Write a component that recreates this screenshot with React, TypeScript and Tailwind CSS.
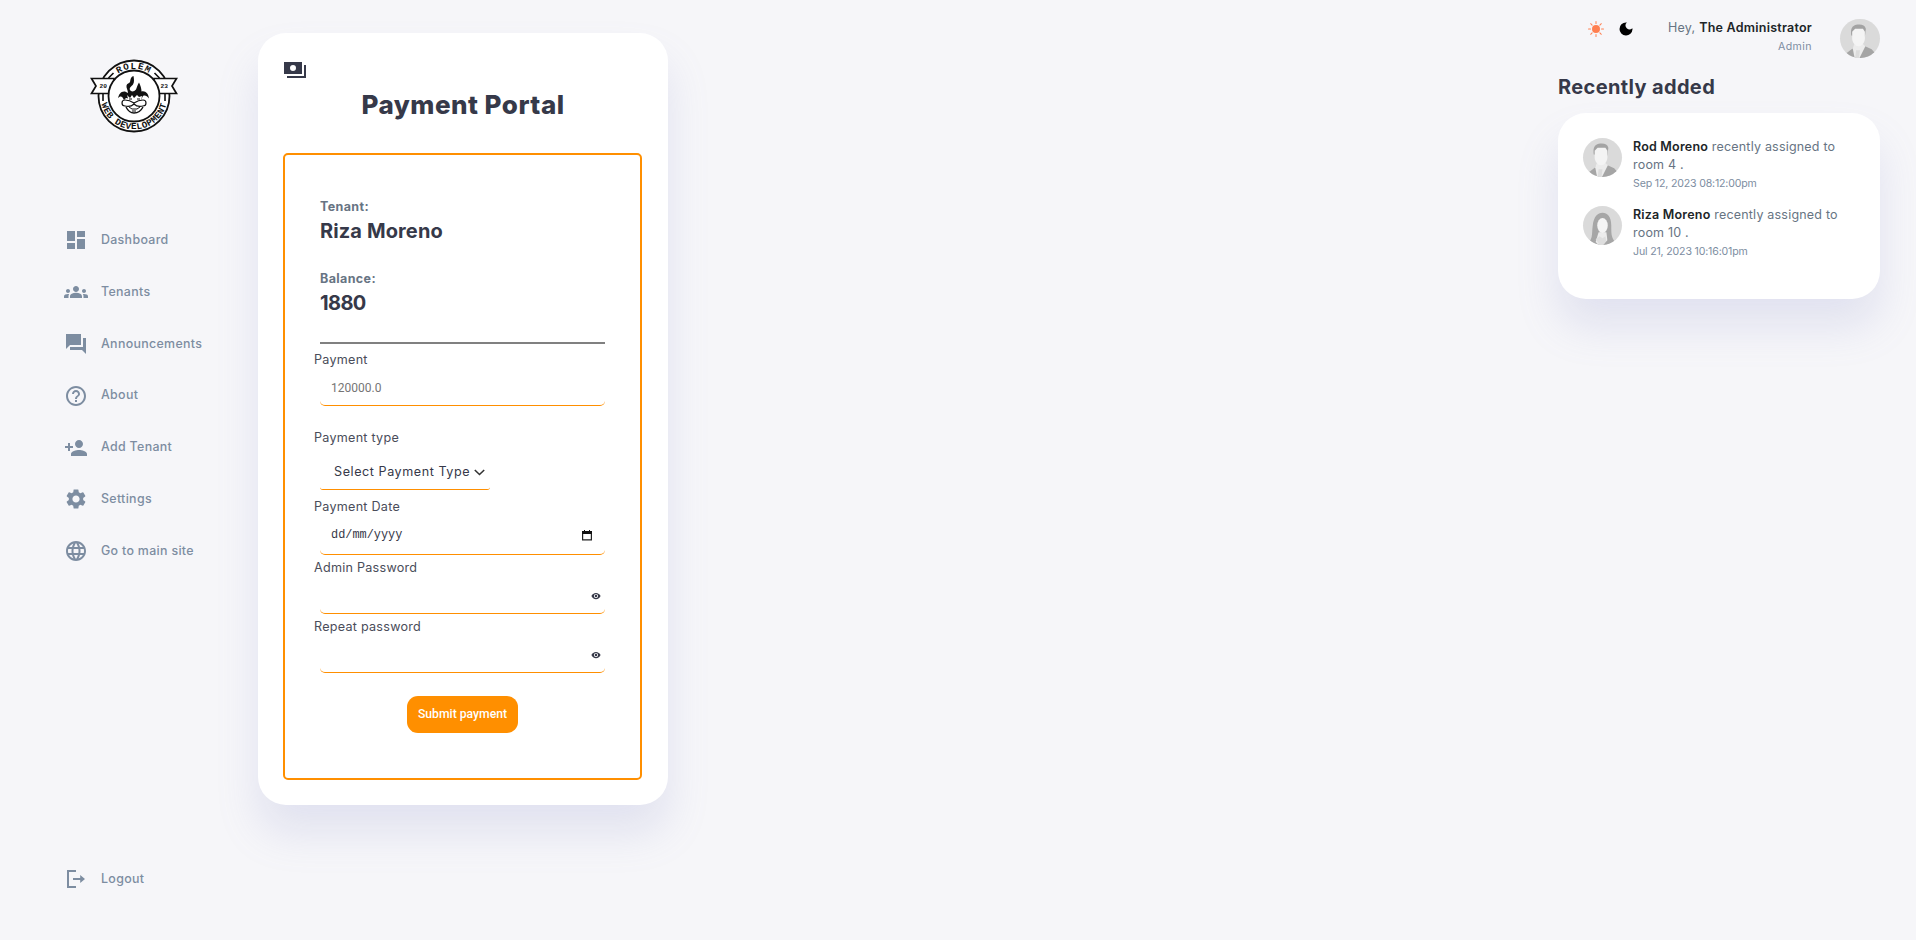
import type { ReactNode } from "react";
import { MdDashboard, MdGroups, MdHelpOutline, MdPersonAdd, MdSettings, MdLanguage, MdVisibility } from "react-icons/md";
import { BsSunFill } from "react-icons/bs";

function AnnouncementsIcon() {
  return (
    <svg viewBox="0 0 24 24" width="24" height="24" fill="currentColor">
      <path d="M22 6h-3v9H6v3h12l4 4V6zM17 13V2H2v15l4-4h11z" />
    </svg>
  );
}

function LogoutIcon() {
  return (
    <svg viewBox="0 0 24 24" width="24" height="24" fill="currentColor">
      <path d="M3 3h9v2H5v14h7v2H3z" />
      <path d="M9 11h7.2V8l4.8 4-4.8 4v-3H9z" />
    </svg>
  );
}

function PaymentsIcon() {
  return (
    <svg viewBox="0 0 24 24" width="24" height="24" fill="#363949">
      <path fillRule="evenodd" d="M1 4h18v12H1zM10 7a3 3 0 1 0 0 6 3 3 0 0 0 0-6z" />
      <path d="M21 7h2v13H4v-2h17z" />
    </svg>
  );
}

function MoonIcon() {
  return (
    <svg viewBox="0 0 14 14" width="14" height="14">
      <path d="M7 .5a6.500 6.500 0 1 0 6.500 6.800c0-.3-.1-.7-.2-1A3.700 3.700 0 1 1 7.900.6 7 7 0 0 0 7 .5z" fill="#000" />
    </svg>
  );
}

function Logo() {
  return (
    <svg viewBox="0 0 88 76" width="88" height="76" fill="none" stroke="#111">
      <defs>
        <path id="arcTop" d="M16.500 38a27.500 27.500 0 0 1 55 0" />
        <path id="arcBottom" d="M10.500 38a33.500 33.500 0 0 0 67 0" />
      </defs>
      <circle cx="44" cy="38" r="35.500" fill="#fff" strokeWidth="1.800" />
      <path d="M18.500 20l5-5M69.500 20l-5-5M13 36v7M75 36v7" strokeWidth="1.600" />
      <path d="M1.500 20.500H24v15H1.500l4.500-7.500zM86.500 20.500H64v15h22.500L82 28z" fill="#fff" strokeWidth="1.700" />
      <circle cx="44" cy="38" r="25.500" fill="#fff" strokeWidth="1.800" />
      <g fill="#111" stroke="none" fontFamily="Liberation Mono, monospace" fontWeight="700">
        <text fontSize="9.200" letterSpacing="1.300">
          <textPath href="#arcTop" startOffset="50%" textAnchor="middle">ROLEM</textPath>
        </text>
        <text fontSize="9.200" letterSpacing="0.450">
          <textPath href="#arcBottom" startOffset="50%" textAnchor="middle">WEB DEVELOPMENT</textPath>
        </text>
        <text x="9.500" y="30.300" fontSize="6.200">20</text>
        <text x="70.500" y="30.300" fontSize="6.200">23</text>
      </g>
      <path d="M28 40c1-4 3-7 7-6.500l3 1.500c0-3-2-5-1.500-7.500.5-2 2.500-2 3.500-3.500.5-3 1-5.500 3.500-6 .5 3 1 6-.5 8.500-1.500 2-4 3-3 5.500 1 2 4 2 6-.5 1-2 1.500-5 3-7 1.500 3 2.500 6 2.500 9 4-1 7 2 7.500 7-2-2.500-4-3.500-6-2.500-1 1-1 3-2 4l-5-2-5 1-5-1-2 2c-1-2-2-4-4-3.500z" fill="#111" stroke="none" />
      <path d="M37 37l3 3 2-3 2 3 3-3 2 2 3-1-1 6H39z" fill="#fff" stroke="none" />
      <path d="M35 42c-4 0-4 6 0 6 4 1 7 0 9-2 2 2 5 3 9 2 4 0 4-6 0-6-3 0-6 1-9 3-3-2-6-3-9-3z" fill="#fff" strokeWidth="1.200" />
      <path d="M36 49c2 4 4 6 8 6s7-2 9-6" fill="#fff" strokeWidth="1.400" />
      <path d="M39 49l3 2h5l3-2M42 53h4M39 41h3M47 41h3" strokeWidth="1" />
    </svg>
  );
}

function Avatar({ woman = false }: { woman?: boolean }) {
  return (
    <svg viewBox="0 0 40 40" className="size-full rounded-full bg-[#dadada]">
      {woman ? (
        <>
          <path d="M7 36c3-4 2-9 3-16C11 11 15 7 20 7s9 4 9 13c0 8 0 11 3 16l-7 4H15z" fill="#a6a6a6" />
          <path d="M16 27h8l1 8-5 5h-4l-3-3z" fill="#ececec" />
          <ellipse cx="20" cy="20" rx="5.400" ry="7.600" fill="#f4f4f4" />
          <path d="M13 34l4-3 3 2 3-2 1 5-3 4h-4z" fill="#dedede" />
        </>
      ) : (
        <>
          <path d="M5 36l9-7 4-2h5l9 4 5 6-8 3H10z" fill="#a5a5a5" />
          <path d="M14.500 25h8l3 3-6 12h-5l-2-10z" fill="#ececec" />
          <path d="M16 32h4l-1 8h-4z" fill="#dcdcdc" />
          <path d="M11 17c-1-7 1-10 5-11 5-1 9 0 10 4l-1 8z" fill="#a3a3a3" />
          <path d="M12 13l3-3h8l2 3v7c0 4-3 8-6.500 8S12 24 12 20z" fill="#f4f4f4" />
        </>
      )}
    </svg>
  );
}

function NavItem({ icon, children }: { icon: ReactNode; children: ReactNode }) {
  return (
    <a className="flex h-[51.800px] items-center gap-[13px] text-[12.400px] font-medium tracking-[0.026em] text-[#7d8da1]">
      <span className="w-6">{icon}</span>
      <span>{children}</span>
    </a>
  );
}

function Label({ children }: { children: ReactNode }) {
  return <label className="-ml-1.5 block h-5 text-[12.600px] leading-5 tracking-[0.020em] text-[#4a4d5a]">{children}</label>;
}

function PasswordField({ label }: { label: string }) {
  return (
    <div className="h-[59px] pt-[3px]">
      <Label>{label}</Label>
      <div className="flex h-9 items-center justify-end rounded-[5px] border-b border-[#ff8f00] pr-1">
        <MdVisibility size={10} />
      </div>
    </div>
  );
}

function Update({ name, room, date, woman }: { name: string; room: string; date: string; woman?: boolean }) {
  return (
    <div className="flex h-[68px] gap-[11px]">
      <div className="size-[39px] shrink-0"><Avatar woman={woman} /></div>
      <div className="text-[12.500px] leading-[18px] tracking-[0.016em] text-[#677483]">
        <p className="whitespace-nowrap">
          <b className="font-semibold text-[#202528]">{name}</b> recently assigned to
          <br />
          {room}
        </p>
        <small className="mt-px block text-[10.600px] tracking-[-0.016em] text-[#7d8da1]">{date}</small>
      </div>
    </div>
  );
}

export default function App() {
  return (
    <div className="flex h-[940px] w-[1916px] overflow-hidden bg-[#f6f6f9] font-['Inter',sans-serif] text-[#363949]">
      <aside className="flex w-[258px] flex-col pl-16">
        <div className="h-[214.500px] pt-[58px] pl-[26px]"><Logo /></div>
        <nav className="flex flex-col">
          <NavItem icon={<MdDashboard size={24} />}>Dashboard</NavItem>
          <NavItem icon={<MdGroups size={24} />}>Tenants</NavItem>
          <NavItem icon={<AnnouncementsIcon />}>Announcements</NavItem>
          <NavItem icon={<MdHelpOutline size={24} />}>About</NavItem>
          <NavItem icon={<MdPersonAdd size={24} />}>Add Tenant</NavItem>
          <NavItem icon={<MdSettings size={24} />}>Settings</NavItem>
          <NavItem icon={<MdLanguage size={24} />}>Go to main site</NavItem>
        </nav>
        <div className="mt-auto pb-[35px]">
          <NavItem icon={<LogoutIcon />}>Logout</NavItem>
        </div>
      </aside>

      <main className="mt-[33px] h-[772px] w-[410px] rounded-[28px] bg-white px-[25px] pt-[25px] shadow-[0_28px_42px_rgba(132,139,200,0.18)]">
        <PaymentsIcon />
        <h1 className="mt-1 h-11 text-center text-[26px] leading-[38px] font-extrabold tracking-[0.019em]">Payment Portal</h1>
        <form className="mt-[23px] h-[627px] w-[359px] rounded-[5px] border-2 border-[#ff8f00] px-[35px] pt-[42px]">
          <p className="h-5 text-[12.500px] leading-5 font-bold tracking-[0.030em] text-[#677483]">Tenant:</p>
          <p className="h-[52px] text-[20px] leading-7 font-bold tracking-[0.006em]">Riza Moreno</p>
          <p className="h-5 text-[12.500px] leading-5 font-bold tracking-[0.030em] text-[#677483]">Balance:</p>
          <p className="h-[53px] text-[20px] leading-7 font-bold tracking-[-0.030em]">1880</p>
          <hr className="h-0.5 border-0 bg-[#808080]" />
          <div className="h-[84px] pt-1.5">
            <Label>Payment</Label>
            <div className="flex h-9 items-center rounded-[5px] border-b border-[#ff8f00] pl-[11px] font-['Roboto',sans-serif] text-[12px] text-[#757575]">120000.0</div>
          </div>
          <Label>Payment type</Label>
          <div className="flex h-[42px] w-[170px] items-center gap-1 rounded-[3px] border-b border-[#ff8f00] pt-2 pl-3.5">
            <span className="w-[136px] text-[12.600px] tracking-[0.044em] whitespace-nowrap">Select Payment Type</span>
            <svg width="11" height="7" viewBox="0 0 11 7" fill="none" stroke="#333" strokeWidth="1.600"><path d="M.8 1l4.700 4.500L10.200 1" /></svg>
          </div>
          <div className="h-[65px] pt-[7px]">
            <Label>Payment Date</Label>
            <div className="flex h-[38px] items-center justify-between rounded-[5px] border-b border-[#ff8f00] pr-[13px] pl-[11px]">
              <span className="font-['Liberation_Mono',monospace] text-[11.900px]">dd/mm/yyyy</span>
              <svg width="10" height="11" viewBox="0 0 10 11"><path d="M.6 1.600h8.800v8.300H.6z" fill="none" stroke="#222" strokeWidth="1.200" /><path d="M0 1h10v3H0zM2 0h1v1H2zM7 0h1v1H7z" fill="#111" /></svg>
            </div>
          </div>
          <PasswordField label="Admin Password" />
          <PasswordField label="Repeat password" />
          <button className="mx-auto mt-[23px] block h-[37px] w-[111px] rounded-[11px] bg-[#ff8f00] font-['Roboto',sans-serif] text-[12.200px] font-medium text-white">Submit payment</button>
        </form>
      </main>

      <section className="mr-9 ml-auto w-[322px] pt-[18px]">
        <header className="flex h-[51px] justify-end">
          <div className="flex h-[21px] items-center gap-[15px]">
            <BsSunFill size={16} color="#ff7f50" />
            <MoonIcon />
          </div>
          <div className="ml-[35px] text-right leading-[18px]">
            <p className="h-5 text-[12.500px] leading-5 tracking-[0.019em] text-[#677483]">Hey, <b className="font-semibold text-[#202528]">The Administrator</b></p>
            <small className="block text-[10.600px] tracking-[0.04em] text-[#7d8da1]">Admin</small>
          </div>
          <div className="mt-px ml-7 h-[39px] w-10"><Avatar /></div>
        </header>
        <h2 className="h-11 text-[20px] leading-9 font-bold tracking-[0.018em]">Recently added</h2>
        <div className="h-[186px] rounded-[28px] bg-white p-[25px] shadow-[0_28px_42px_rgba(132,139,200,0.18)]">
          <Update name="Rod Moreno" room="room 4 ." date="Sep 12, 2023 08:12:00pm" />
          <Update name="Riza Moreno" room="room 10 ." date="Jul 21, 2023 10:16:01pm" woman />
        </div>
      </section>
    </div>
  );
}
